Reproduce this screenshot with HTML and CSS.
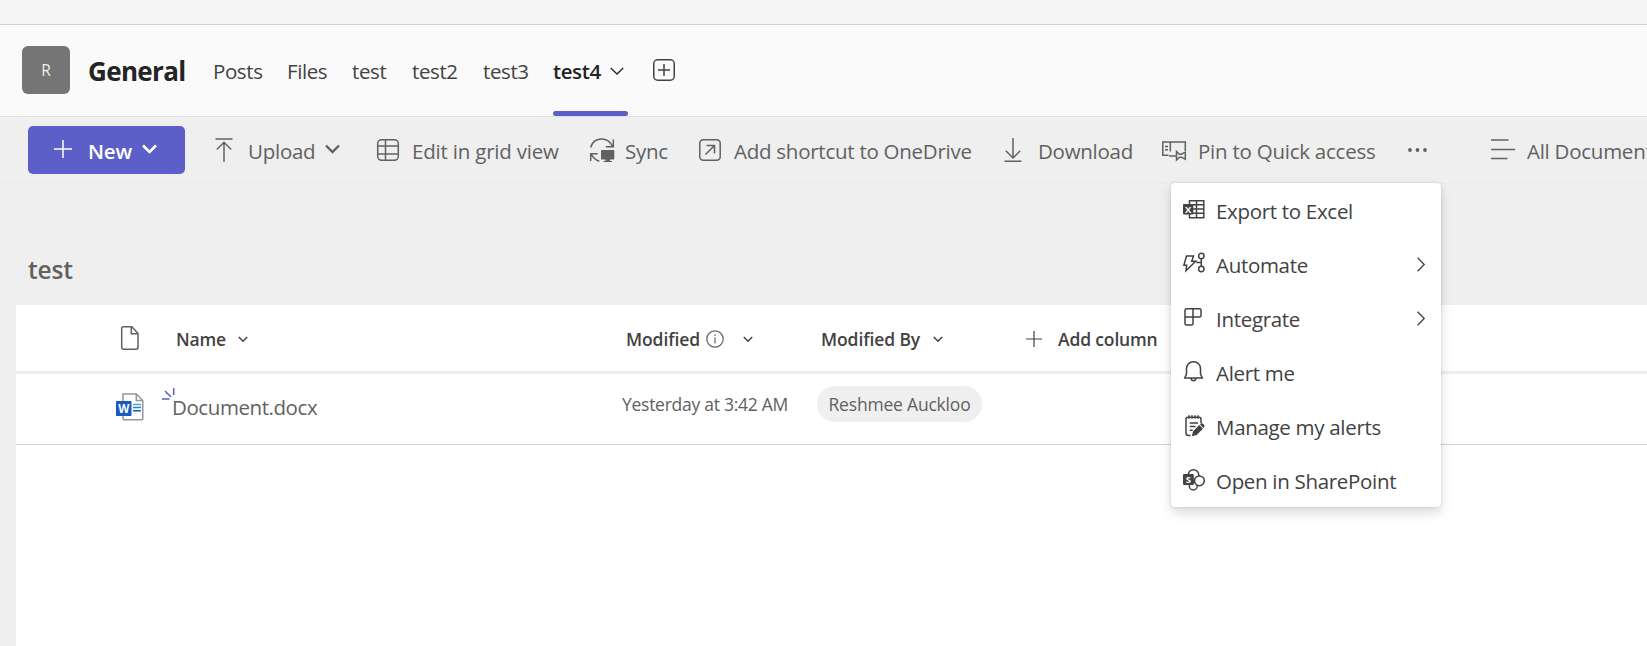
FILE: index.html
```html
<!DOCTYPE html>
<html lang="en">
<head>
<meta charset="utf-8">
<title>General - test4</title>
<link rel="stylesheet" href="styles.css">
</head>
<body>
<div class="titlebar"></div>
<header class="channel">
  <div class="avatar">R</div>
  <h1 class="channel-name">General</h1>
  <nav class="tabs">
    <a class="tab tab-posts"><span>Posts</span></a>
    <a class="tab tab-files"><span>Files</span></a>
    <a class="tab tab-test"><span>test</span></a>
    <a class="tab tab-test2"><span>test2</span></a>
    <a class="tab tab-test3"><span>test3</span></a>
    <a class="tab tab-active"><span>test4</span>
      <svg class="tab-chevron" width="14" height="8" viewBox="0 0 14 8"><path d="M.8 1 7 7l6.200-6"/></svg></a>
  </nav>
  <svg class="add-tab" width="22" height="22" viewBox="0 0 22 22"><rect x=".75" y=".75" width="20.500" height="20.500" rx="4"/><path d="M11 5v12M5 11h12"/></svg>
</header>

<div class="toolbar">
  <button class="new"><svg class="new-plus" width="18" height="18" viewBox="0 0 18 18"><path d="M9 0v18M0 9h18"/></svg><span>New</span><svg class="new-chevron" width="15" height="10" viewBox="0 0 15 10"><path d="M1 1.500 7.500 8 14 1.500"/></svg></button>
  <div class="cmd cmd-upload"><svg class="ico" viewBox="0 0 24 24"><path d="M3.500 1h17M12 24V4.500M4.800 11.500 12 4.300l7.200 7.200"/></svg><span>Upload</span><svg class="cmd-chevron" width="15" height="10" viewBox="0 0 15 10"><path d="M1 1.500 7.500 8 14 1.500"/></svg></div>
  <div class="cmd cmd-edit"><svg class="ico" viewBox="0 0 24 24"><rect x="1.700" y="1.700" width="20.600" height="20.600" rx="4"/><path d="M9.500 1.700v20.600M1.700 8h20.600M1.700 16h20.600"/></svg><span>Edit in grid view</span></div>
  <div class="cmd cmd-sync"><svg class="ico" viewBox="0 0 24 24"><path d="M.7 9.500C3.500-1 17.500-2.500 22.500 8.500M23.300 1.500v7.300h-7.500M9.300 23.300C5.800 22 3 19.800 1.400 16.200M.7 23v-7.300h7"/><path class="solid" d="M12 12h11.500q.8 0 .8.800v8q0 .800-.8.800H20v1.400h2V24h-8.500v-1h2v-1.400H12q-1-.1-1-.9v-7.800q0-.9 1-.9z"/></svg><span>Sync</span></div>
  <div class="cmd cmd-shortcut"><svg class="ico" viewBox="0 0 24 24"><rect x="1.800" y="1.800" width="20.400" height="20.400" rx="3.500"/><path d="M7.500 16.500 16.300 7.700M8.500 7.500h8v8"/></svg><span>Add shortcut to OneDrive</span></div>
  <div class="cmd cmd-download"><svg class="ico" viewBox="0 0 24 24"><path d="M3.500 23.300h17M12 0v20M4.800 12.800 12 20l7.200-7.200"/></svg><span>Download</span></div>
  <div class="cmd cmd-pin"><svg class="ico" viewBox="0 0 24 24"><path d="M6.500 17.300H.8V4h22.500v9M8.300 4v9.500M3 8.500h3M3 11.800h3M7 18h7.500"/><path d="M14.500 13.500v8.500l3-2.800h1.800l4 2v-7l-4 2h-1.800z"/></svg><span>Pin to Quick access</span></div>
  <div class="cmd cmd-more"><svg class="ico" viewBox="0 0 24 24"><circle class="solid" cx="4" cy="12" r="1.900"/><circle class="solid" cx="11.500" cy="12" r="1.900"/><circle class="solid" cx="19" cy="12" r="1.900"/></svg></div>
  <div class="cmd cmd-view"><svg class="ico" viewBox="0 0 24 24"><path d="M0 2h17.500M0 11.500h24M0 20.500h16.500"/></svg><span>All Documents</span></div>
</div>

<main class="library">
  <h2 class="library-title">test</h2>
  <section class="list">
    <div class="row row-head">
      <div class="cell-icon"><svg width="20" height="26" viewBox="0 0 20 26"><path class="line" d="M3.500 1.700h8.300L18 8.300v13.900q0 2-2 2H3.700q-2 0-2-2V3.700q0-2 1.800-2zM11.300 1.700v7H18"/></svg></div>
      <div class="cell-name"><span>Name</span><svg class="sort" viewBox="0 0 10 7"><path d="m.8 1 4.200 4.300L9.200 1"/></svg></div>
      <div class="cell-modified"><span>Modified</span><svg class="info" width="18" height="18" viewBox="0 0 18 18"><circle cx="9" cy="9" r="8.200"/><path d="M9 7.500v6M9 4.200v1.700"/></svg><svg class="sort" viewBox="0 0 10 7"><path d="m.8 1 4.200 4.300L9.200 1"/></svg></div>
      <div class="cell-by"><span>Modified By</span><svg class="sort" viewBox="0 0 10 7"><path d="m.8 1 4.200 4.300L9.200 1"/></svg></div>
      <div class="cell-add"><svg width="16" height="16" viewBox="0 0 16 16"><path d="M8 0v16M0 8h16"/></svg><span>Add column</span></div>
    </div>
    <div class="row row-file">
      <div class="cell-icon"><svg width="28" height="28" viewBox="0 0 28 28"><path class="page" d="M7.500 1h12.800L26.800 7.500V25q0 1.800-1.800 1.800H8.800Q7 26.800 7 25V1zM20.300 1v6.500h6.500"/><path class="b1" d="M17 11.500h8"/><path class="b2" d="M17 14.500h8"/><path class="b3" d="M17 17.800h8"/><rect class="tile" y="8" width="15.500" height="15" rx=".8"/><text class="tile-letter" x="7.700" y="19.700">W</text></svg></div>
      <div class="cell-name"><svg class="spark" width="13" height="12" viewBox="0 0 13 12"><path d="M0 11h7.500M3 3l6 6M11.700 0v7"/></svg><span>Document.docx</span></div>
      <div class="cell-modified"><span>Yesterday at 3:42 AM</span></div>
      <div class="cell-by"><span class="person">Reshmee Auckloo</span></div>
    </div>
  </section>
</main>

<div class="menu">
  <div class="item"><svg class="mi" viewBox="0 0 22 22"><path d="M6.500 1.700h14.300v17H6.500zM13.500 1.700v17M6.500 5.800h14.300M6.500 10h14.300M6.500 14.300h14.300"/><rect class="ink" x="0" y="5" width="10.300" height="10.500" rx="1"/><text class="mi-letter" x="5.150" y="13.500">X</text></svg><span>Export to Excel</span></div>
  <div class="item"><svg class="mi" viewBox="0 0 22 22"><path d="M3.500 3h7l-1.800 5.200h4L3 17.700l.7-5.500H.9zM13.300 9.500h5M18.300 6v7"/><circle cx="18.300" cy="3" r="2.700"/><circle cx="18.300" cy="16" r="2.700"/></svg><span>Automate</span><svg class="sub" width="8" height="15" viewBox="0 0 8 15"><path d="m.6.7 6.600 6.800L.6 14.300"/></svg></div>
  <div class="item"><svg class="mi" viewBox="0 0 22 22"><path d="M3.500 1.700h13q1.500 0 1.500 1.500v5.300q0 1.500-1.500 1.500H2V3.200q0-1.500 1.500-1.500zM10 1.700v14.800q0 1.500-1.500 1.500h-5Q2 18 2 16.500V10"/></svg><span>Integrate</span><svg class="sub" width="8" height="15" viewBox="0 0 8 15"><path d="m.6.7 6.600 6.800L.6 14.300"/></svg></div>
  <div class="item"><svg class="mi" viewBox="0 0 22 22"><path d="M10.500 .7c-4.200 0-7 3-7 7v5.200L1.800 17h17.400L17.500 12.900V7.700c0-4-2.800-7-7-7zM8 17.200q.4 2.600 2.500 2.600t2.500-2.600"/></svg><span>Alert me</span></div>
  <div class="item"><svg class="mi" viewBox="0 0 22 22"><path d="M7.500 20.500h-2Q3 20.500 3 18V4Q3 2.200 5 2.200h11q2 0 2 2v4M6 .3v3.500M9 .3v3.500M12 .3v3.500M15 .3v3.500M6.700 8H15M6.700 11.500h5.800M6.700 15.200h3"/><path class="ink" d="m8.800 21.300 1.300-5 6.200-6.200 3.600 3.600-6.200 6.300zM17.100 9.500l.9-.9q1.100-.7 2.300.4l.7.700q1 1.100.1 2.300l-.8.900z"/></svg><span>Manage my alerts</span></div>
  <div class="item"><svg class="mi" viewBox="0 0 22 22"><circle class="petal" cx="10.300" cy="17" r="4"/><circle class="petal" cx="10.500" cy="6" r="5.300"/><circle class="petal" cx="16.400" cy="11.800" r="4.900"/><rect class="ink" x="0" y="5" width="10.800" height="11" rx="1"/><text class="mi-letter" x="5.400" y="13.800">S</text></svg><span>Open in SharePoint</span></div>
</div>
</body>
</html>
```
FILE: styles.css
```css
* { box-sizing: border-box; }
body {
  margin: 0;
  width: 1647px;
  height: 646px;
  overflow: hidden;
  position: relative;
  background: #efefef;
  color: #616161;
  font-family: "Open Sans", "Noto Sans", sans-serif;
}
svg { display: block; flex: none; fill: none; stroke: currentColor; stroke-width: 1.5; overflow: visible; }
span { white-space: nowrap; }
.solid, .ink { fill: currentColor; stroke: none; }
h1, h2 { margin: 0; }

.titlebar { height: 25px; background: #f5f5f5; border-bottom: 1px solid #d1d1d1; }
.channel { display: flex; height: 92px; padding-left: 22px; background: #fafafa; border-bottom: 1px solid #e0e0e0; }
.avatar { width: 48px; height: 48px; margin-top: 21px; border-radius: 6px; background: #757575; color: #f0f0f0; font-size: 15.5px; line-height: 48px; text-align: center; }
.channel-name { width: 125px; margin-left: 18px; padding-top: 1px; font-size: 26px; font-weight: 700; line-height: 91px; color: #242424; letter-spacing: -.65px; }
.tabs { display: flex; }
.tab { position: relative; display: flex; align-items: center; font-size: 20.5px; color: #424242; height: 91px; letter-spacing: -.4px; }
.tab-posts { width: 74px; }
.tab-files { width: 65px; }
.tab-test { width: 60px; }
.tab-test2 { width: 71px; }
.tab-test3 { width: 70px; }
.tab-active { width: 75px; color: #242424; font-weight: 600; justify-content: space-between; padding-right: 4px; }
.tab-active::after { content: ""; position: absolute; left: 0; right: 0; bottom: 0; height: 5px; border-radius: 3px; background: #5b5fc7; }
.tab-chevron { stroke-width: 1.3; }
.add-tab { margin: 34px 0 0 25px; color: #424242; }

.toolbar { display: flex; height: 67px; padding: 9px 0 0 28px; border-bottom: 1px solid #ebebeb; overflow: hidden; font-size: 20.5px; }
.new { display: flex; flex: none; align-items: center; width: 157px; height: 48px; margin-right: 27px; padding: 0 0 0 26px; border: 0; border-radius: 5px; background: #5b5fc7; color: #fff; font: 600 20.5px "Open Sans", sans-serif; }
.new span { width: 54px; margin-left: 16px; padding-top: 2px; text-align: left; letter-spacing: -.2px; }
.new-plus { margin-bottom: 2px; }
.new-chevron { margin-bottom: 2px; stroke-width: 2.5; }
.cmd { display: flex; align-items: center; gap: 12px; height: 48px; flex: none; letter-spacing: -.26px; }
.cmd span { padding-top: 2px; }
.ico { width: 24px; height: 24px; }
.cmd-upload { width: 164px; }
.cmd-chevron { margin: 0 0 2px -2px; stroke-width: 2.3; }
.cmd-edit { width: 214px; letter-spacing: -.2px; }
.cmd-sync { width: 108px; gap: 11px; }
.cmd-shortcut { width: 303px; }
.cmd-download { width: 161px; gap: 13px; }
.cmd-pin { width: 244px; letter-spacing: -.24px; }
.cmd-more { width: 85px; }

.library { padding: 71px 0 0 16px; }
.library-title { height: 50px; margin-left: 12px; font-size: 24.5px; font-weight: 600; line-height: 30px; letter-spacing: -.2px; }
.list { height: 341px; background: #fff; }
.row { display: grid; grid-template-columns: 156px 450px 195px 210px 1fr; }
.row > div { display: flex; align-items: center; }
.row-head { height: 69px; border-bottom: 3px solid #efefef; color: #424242; font-size: 17.5px; font-weight: 600; }
.row-head span { padding-top: 1px; }
.row-file { height: 71px; border-bottom: 1px solid #d1d1d1; }
.row .cell-icon { padding-left: 104px; color: #616161; }
.row-file .cell-icon { padding: 0 0 5px 100px; }
.sort { width: 10px; height: 7px; margin-top: 2px; }
.row-head .cell-name { padding-left: 4px; gap: 12px; letter-spacing: -.2px; }
.row-head .cell-modified { padding-left: 4px; letter-spacing: -.1px; }
.info { margin: 1px 19px 0 6px; stroke-width: 1.2; color: #616161; }
.row-head .cell-by { padding-left: 4px; gap: 13px; letter-spacing: -.1px; }
.row-head .cell-add { padding-top: 1px; gap: 15px; letter-spacing: -.15px; }
.row-head .cell-add span { padding-top: 0; }
.cell-add svg { margin-left: -1px; margin-right: 1px; stroke-width: 1.2; }
.page { stroke: #979797; fill: #fff; }
.b1 { stroke: #41a5ee; }
.b2 { stroke: #2b7cd3; }
.b3 { stroke: #185abd; }
.tile { fill: #185abd; stroke: none; }
.tile-letter { fill: #fff; stroke: none; font: 700 11.5px "Open Sans", sans-serif; text-anchor: middle; }
.row-file .cell-name { position: relative; padding-bottom: 4px; font-size: 20.5px; letter-spacing: -.43px; }
.spark { position: absolute; left: -10px; top: 14px; color: #5b5fc7; }
.row-file .cell-modified { padding-bottom: 11px; font-size: 17.5px; letter-spacing: -.27px; }
.row-file .cell-by { padding-bottom: 10px; font-size: 17.5px; letter-spacing: -.2px; }
.person { width: 165px; height: 36px; line-height: 36px; border-radius: 18px; background: #efefef; text-align: center; }

.menu { position: absolute; left: 1171px; top: 183px; width: 270px; height: 324px; border-radius: 4px; background: #fff; color: #424242; font-size: 20.5px; letter-spacing: -.31px; box-shadow: 0 6px 12px rgba(0,0,0,.14), 0 0 3px rgba(0,0,0,.14); }
.item { display: flex; align-items: center; height: 54px; padding: 0 16px 0 12px; }
.item span { padding-top: 2px; }
.mi { width: 22px; height: 22px; margin-right: 11px; }
.mi-letter { fill: #fff; stroke: none; font: 700 9.5px "Open Sans", sans-serif; text-anchor: middle; letter-spacing: 0; }
.petal { fill: #fff; }
.sub { margin-left: auto; stroke-width: 1.3; }
```
